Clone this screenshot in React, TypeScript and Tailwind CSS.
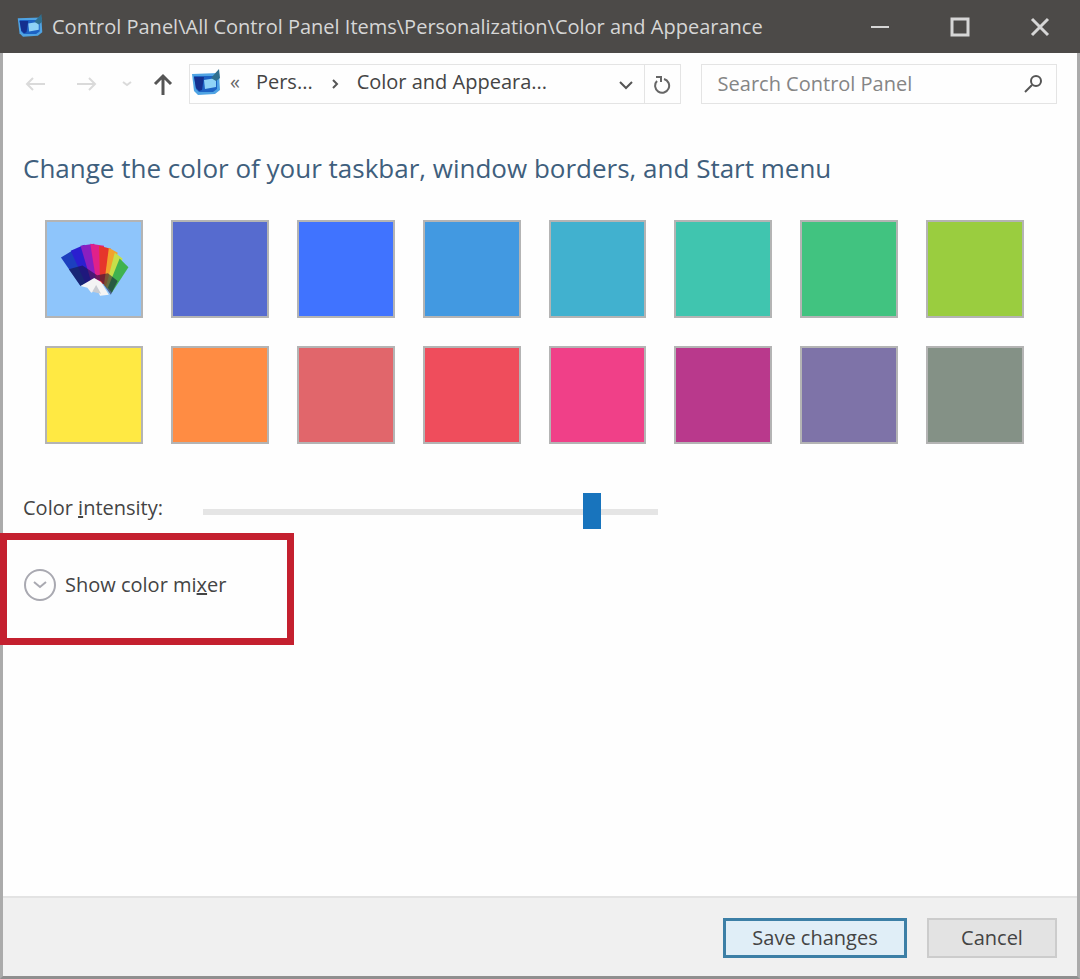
import React, { useState } from "react";

type Swatch = { name: string; color: string };

const swatches: Swatch[] = [
    { name: "Automatic", color: "#8ec5fb" },
    { name: "Indigo", color: "#566bcf" },
    { name: "Blue", color: "#4073ff" },
    { name: "Sky", color: "#4299e1" },
    { name: "Turquoise", color: "#41b1cf" },
    { name: "Mint", color: "#40c5af" },
    { name: "Green", color: "#41c380" },
    { name: "Lime", color: "#9acd3f" },
    { name: "Yellow", color: "#ffe943" },
    { name: "Orange", color: "#ff8c43" },
    { name: "Salmon", color: "#e1666b" },
    { name: "Red", color: "#ef4d5c" },
    { name: "Pink", color: "#f04088" },
    { name: "Magenta", color: "#b9398c" },
    { name: "Violet", color: "#7e73a8" },
    { name: "Gray", color: "#849186" },
];

const MonitorIcon: React.FC<{ className?: string }> = ({ className }) => (
    <svg viewBox="0 0 32 30" className={className} aria-hidden="true">
        <path d="M2 5 L29 4 L30 21 L25 25 L8 26 L4 22 Z" fill="#4fa3e3" />
        <path d="M4 7 L27 7 L27 20 L23 23 L9 23 L6 20 Z" fill="#1d62c4" />
        <path d="M4 8 L14 8 L12 21 L9 22 L6 19 Z" fill="#14308f" />
        <path d="M14 11 L26 9 L26 18 L15 20 Z" fill="#8fd2f7" />
        <path d="M21 9 L29 0 L30 9 L26 12 Z" fill="#2f6f8f" />
    </svg>
);

const PaletteIcon = () => (
    <svg viewBox="0 0 72 64" className="w-3/4" aria-hidden="true">
        <path d="M2 20 L15 12 L38 43 L22 49 Z" fill="#1c3fbe" />
        <path d="M12 13 L26 7 L40 43 L27 46 Z" fill="#2b1fd0" />
        <path d="M22 8 L36 6 L43 44 L33 45 Z" fill="#8a1fc0" />
        <path d="M32 6 L46 8 L46 46 L38 44 Z" fill="#e0218a" />
        <path d="M41 8 L53 11 L49 48 L42 46 Z" fill="#e6352b" />
        <path d="M51 10 L60 15 L51 52 L46 48 Z" fill="#f2a22c" />
        <path d="M57 15 L65 21 L53 54 L48 50 Z" fill="#c6e04a" />
        <path d="M62 21 L71 30 L54 56 L50 51 Z" fill="#3fb24f" />
        <path d="M10 32 L24 28 L39 38 L50 36 L60 44 L53 58 L43 44 L36 42 L22 49 Z" fill="#151238" opacity="0.55" />
        <path d="M22 49 L36 41 L43 45 L51 58 L42 59 L39 53 L33 56 L29 51 Z" fill="#f4f4f4" />
        <path d="M38 48 L43 57 L34 55 Z" fill="#c9ccd2" />
    </svg>
);

const TitleBar = () => (
    <header className="flex h-[53px] items-center bg-[#4c4a48] pl-4 text-[#d6d6d6]">
        <MonitorIcon className="h-7 w-7 shrink-0" />
        <h1 className="ml-2 flex-1 truncate text-xl">
            Control Panel\All Control Panel Items\Personalization\Color and Appearance
        </h1>
        <button aria-label="Minimize" className="flex h-full w-20 shrink-0 items-center justify-center">
            <svg viewBox="0 0 20 20" className="h-5 w-5" stroke="currentColor" strokeWidth="2" fill="none">
                <path d="M1 10 H19" />
            </svg>
        </button>
        <button aria-label="Maximize" className="flex h-full w-20 shrink-0 items-center justify-center">
            <svg viewBox="0 0 20 20" className="h-5 w-5" stroke="currentColor" strokeWidth="3" fill="none">
                <path d="M2 2 H18 V18 H2 Z" />
            </svg>
        </button>
        <button aria-label="Close" className="flex h-full w-20 shrink-0 items-center justify-center">
            <svg viewBox="0 0 20 20" className="h-5 w-5" stroke="currentColor" strokeWidth="3" fill="none">
                <path d="M2 2 L18 18 M18 2 L2 18" />
            </svg>
        </button>
    </header>
);

const NavBar = () => {
    const [query, setQuery] = useState("");

    return (
        <nav className="flex items-center pt-[11px] pr-5 pl-5 text-xl text-[#444]">
            <button aria-label="Back" className="w-7 shrink-0 text-[#dadada]">
                <svg viewBox="0 0 24 24" className="h-6 w-6" stroke="currentColor" strokeWidth="2" fill="none">
                    <path d="M22 12 H4 M10 6 L4 12 L10 18" />
                </svg>
            </button>
            <button aria-label="Forward" className="ml-6 w-7 shrink-0 text-[#dadada]">
                <svg viewBox="0 0 24 24" className="h-6 w-6" stroke="currentColor" strokeWidth="2" fill="none">
                    <path d="M2 12 H20 M14 6 L20 12 L14 18" />
                </svg>
            </button>
            <button aria-label="Recent locations" className="ml-4 w-4 shrink-0 text-[#dadada]">
                <svg viewBox="0 0 16 16" className="h-4 w-4" stroke="currentColor" strokeWidth="2" fill="none">
                    <path d="M4 6 L8 9 L12 6" />
                </svg>
            </button>
            <button aria-label="Up" className="ml-4 w-6 shrink-0 text-[#555]">
                <svg viewBox="0 0 24 24" className="h-6 w-6" stroke="currentColor" strokeWidth="3" fill="none">
                    <path d="M12 23 V4 M4 12 L12 4 L20 12" />
                </svg>
            </button>
            <div className="ml-3.5 flex h-10 min-w-0 flex-[3] items-center border border-[#e4e4e4]">
                <MonitorIcon className="h-8 w-8 shrink-0" />
                <span className="ml-2 pb-1 text-[#666]">«</span>
                <a href="#personalization" className="ml-4 pb-1">Pers...</a>
                <svg viewBox="0 0 12 12" className="mx-4 h-3 w-3 shrink-0" stroke="#555" strokeWidth="2" fill="none">
                    <path d="M4 2 L8 6 L4 10" />
                </svg>
                <a href="#color" className="flex-1 truncate pb-1">Color and Appeara...</a>
                <button aria-label="Previous locations" className="flex h-full w-9 shrink-0 items-center justify-center">
                    <svg viewBox="0 0 16 16" className="h-4 w-4" stroke="#555" strokeWidth="2" fill="none">
                        <path d="M2 6 L8 12 L14 6" />
                    </svg>
                </button>
                <button aria-label="Refresh" className="flex h-full w-9 shrink-0 items-center justify-center border-l border-[#e4e4e4]">
                    <svg viewBox="0 0 20 20" className="h-5 w-5" stroke="#666" strokeWidth="2" fill="none">
                        <path d="M12 5 A7 7 0 1 1 5 7 M4 3 H9 V8" />
                    </svg>
                </button>
            </div>
            <label className="ml-5 flex h-10 min-w-0 flex-[2] items-center border border-[#e4e4e4] pr-3 pl-4">
                <input
                    aria-label="Search Control Panel"
                    placeholder="Search Control Panel"
                    value={query}
                    onChange={(e) => setQuery(e.target.value)}
                    className="min-w-0 flex-1 outline-none placeholder:text-[#858585]"
                />
                <svg viewBox="0 0 20 20" className="h-5 w-5 shrink-0" stroke="#555" strokeWidth="2" fill="none">
                    <circle cx="12" cy="7" r="5" />
                    <path d="M8 11 L1 18" />
                </svg>
            </label>
        </nav>
    );
};

const App = () => {
    const [selected, setSelected] = useState("Automatic");
    const [intensity, setIntensity] = useState(87);

    return (
        <div className="flex min-h-screen flex-col bg-[#fefefe] font-['Open_Sans','Noto_Sans',sans-serif] text-[#444]">
            <TitleBar />
            <div className="flex flex-1 flex-col border-x-3 border-b-3 border-x-[#ababab] border-b-[#8f8f8f]">
                <NavBar />
                <main className="flex-1">
                    <h2 className="mt-12 ml-5 text-[26px] leading-8 text-[#3f5f7d]">
                        Change the color of your taskbar, window borders, and Start menu
                    </h2>
                    <div className="mt-9 mr-[53px] ml-[42px] grid grid-cols-8 gap-7">
                        {swatches.map((s) => (
                            <button
                                key={s.name}
                                aria-label={s.name}
                                aria-pressed={selected === s.name}
                                onClick={() => setSelected(s.name)}
                                className="flex aspect-square items-center justify-center border-2 border-[#b4b4b4]"
                                style={{ backgroundColor: s.color }}
                            >
                                {s.name === "Automatic" && <PaletteIcon />}
                            </button>
                        ))}
                    </div>
                    <div className="mt-[50px] ml-5 flex items-center">
                        <label htmlFor="intensity" className="w-[180px] pb-2 text-xl">
                            Color <span className="underline">i</span>ntensity:
                        </label>
                        <input
                            id="intensity"
                            type="range"
                            min={0}
                            max={100}
                            value={intensity}
                            onChange={(e) => setIntensity(Number(e.target.value))}
                            className="h-9 w-[455px] appearance-none bg-transparent [&::-webkit-slider-runnable-track]:h-1.5 [&::-webkit-slider-runnable-track]:bg-[#e5e5e5] [&::-webkit-slider-thumb]:-mt-4 [&::-webkit-slider-thumb]:h-9 [&::-webkit-slider-thumb]:w-[18px] [&::-webkit-slider-thumb]:appearance-none [&::-webkit-slider-thumb]:bg-[#1874bd]"
                        />
                    </div>
                    <div className="mt-[3px] -ml-[3px] flex h-28 w-[294px] items-center border-7 border-[#c4202f] pb-2 pl-4">
                        <button className="flex items-center gap-2 text-xl">
                            <svg viewBox="0 0 34 34" className="h-[34px] w-[34px]" stroke="#a9a9b1" strokeWidth="2" fill="none">
                                <circle cx="17" cy="17" r="15" />
                                <path d="M11 14 L17 19 L23 14" />
                            </svg>
                            <span>
                                Show color mi<span className="underline">x</span>er
                            </span>
                        </button>
                    </div>
                </main>
                <footer className="flex justify-end gap-5 border-t-2 border-[#e3e3e3] bg-[#f0f0f0] pt-5 pr-5 pb-[18px] text-xl">
                    <button className="h-10 w-[184px] border-3 border-[#3c7fa6] bg-[#e0eef7]">Save changes</button>
                    <button className="h-10 w-[130px] border-2 border-[#cccccc] bg-[#e3e3e3]">Cancel</button>
                </footer>
            </div>
        </div>
    );
};

export default App;
